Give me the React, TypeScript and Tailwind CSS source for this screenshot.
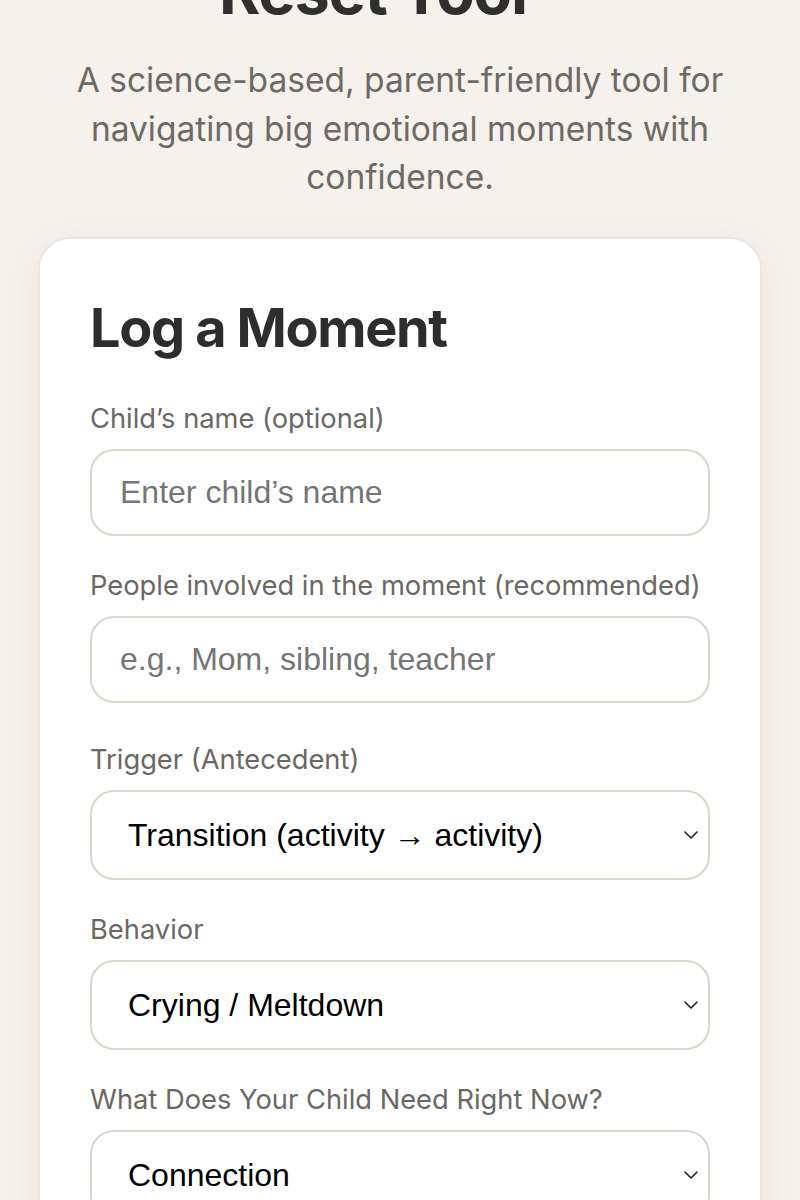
import { ChangeEvent, useState } from "react";

const inter = { fontFamily: "Inter, 'Noto Sans', sans-serif" };
const arial = { fontFamily: "'Liberation Sans', Arial, sans-serif" };

function Chevron() {
  return (
    <svg
      width="14"
      height="8"
      viewBox="0 0 14 8"
      fill="none"
      className="pointer-events-none absolute right-[12px] top-1/2 -translate-y-1/2"
    >
      <path d="M1 1l6 6 6-6" stroke="#222" strokeWidth="1.6" strokeLinecap="round" strokeLinejoin="round" />
    </svg>
  );
}

interface FieldProps {
  label: string;
  className?: string;
  children: React.ReactNode;
}

function Field({ label, className, children }: FieldProps) {
  return (
    <div className={className}>
      <label className="mb-[12px] block text-[27.3px] leading-[36px] text-[#6b6763]">{label}</label>
      {children}
    </div>
  );
}

interface SelectFieldProps {
  value: string;
  options: string[];
  onChange: (v: string) => void;
}

function SelectField({ value, options, onChange }: SelectFieldProps) {
  return (
    <div className="relative">
      <select
        value={value}
        onChange={(e: ChangeEvent<HTMLSelectElement>) => onChange(e.target.value)}
        className="block h-[90px] w-full appearance-none rounded-[24px] border-2 border-[#ddd4ca] bg-white pl-[36px] pr-[40px] text-[32px] text-black outline-none"
        style={arial}
      >
        {options.map((o) => (
          <option key={o}>{o}</option>
        ))}
      </select>
      <Chevron />
    </div>
  );
}

const inputCls =
  "block h-[87px] w-full rounded-[24px] border-2 border-[#ddd4ca] bg-white px-[28px] text-[32px] text-black outline-none placeholder:text-[#757575]";

export default function App() {
  const [trigger, setTrigger] = useState("Transition (activity → activity)");
  const [behavior, setBehavior] = useState("Crying / Meltdown");
  const [need, setNeed] = useState("Connection");

  return (
    <div className="min-h-[1200px] overflow-hidden bg-[#f5f1ed] px-[38px] pb-16" style={inter}>
      <header className="text-center">
        <h1 className="mt-[-43px] text-[63px] font-bold leading-[68px] tracking-[-0.02em] text-[#2f2f2f]">
          Reset Tool<span className="ml-[30px] align-top text-[40px] leading-none">™</span>
        </h1>
        <p className="mx-auto mt-[31px] max-w-[690px] text-[33.5px] leading-[48.5px] text-[#6e6a66]">
          A science-based, parent-friendly tool for navigating big emotional moments with confidence.
        </p>
      </header>

      <main className="mt-[35px] rounded-[32px] border-2 border-[#ece6df] bg-white px-[50px] pb-16 pt-[58px] shadow-[0_8px_40px_rgba(120,100,80,0.08)]">
        <h2 className="text-[54px] font-bold leading-[62px] tracking-[-0.025em] text-[#2d2d2d]">Log a Moment</h2>

        <div className="mt-[42px] flex flex-col">
          <Field label="Child’s name (optional)">
            <input className={inputCls} placeholder="Enter child’s name" style={arial} />
          </Field>

          <Field label="People involved in the moment (recommended)" className="mt-[32px]">
            <input className={inputCls} placeholder="e.g., Mom, sibling, teacher" style={arial} />
          </Field>

          <Field label="Trigger (Antecedent)" className="mt-[39px]">
            <SelectField
              value={trigger}
              onChange={setTrigger}
              options={["Transition (activity → activity)", "Told “no”", "Tired / Hungry", "Sensory overload"]}
            />
          </Field>

          <Field label="Behavior" className="mt-[32px]">
            <SelectField
              value={behavior}
              onChange={setBehavior}
              options={["Crying / Meltdown", "Hitting / Kicking", "Yelling", "Shutting down"]}
            />
          </Field>

          <Field label="What Does Your Child Need Right Now?" className="mt-[32px]">
            <SelectField
              value={need}
              onChange={setNeed}
              options={["Connection", "Space", "Movement", "Rest"]}
            />
          </Field>
        </div>
      </main>
    </div>
  );
}
